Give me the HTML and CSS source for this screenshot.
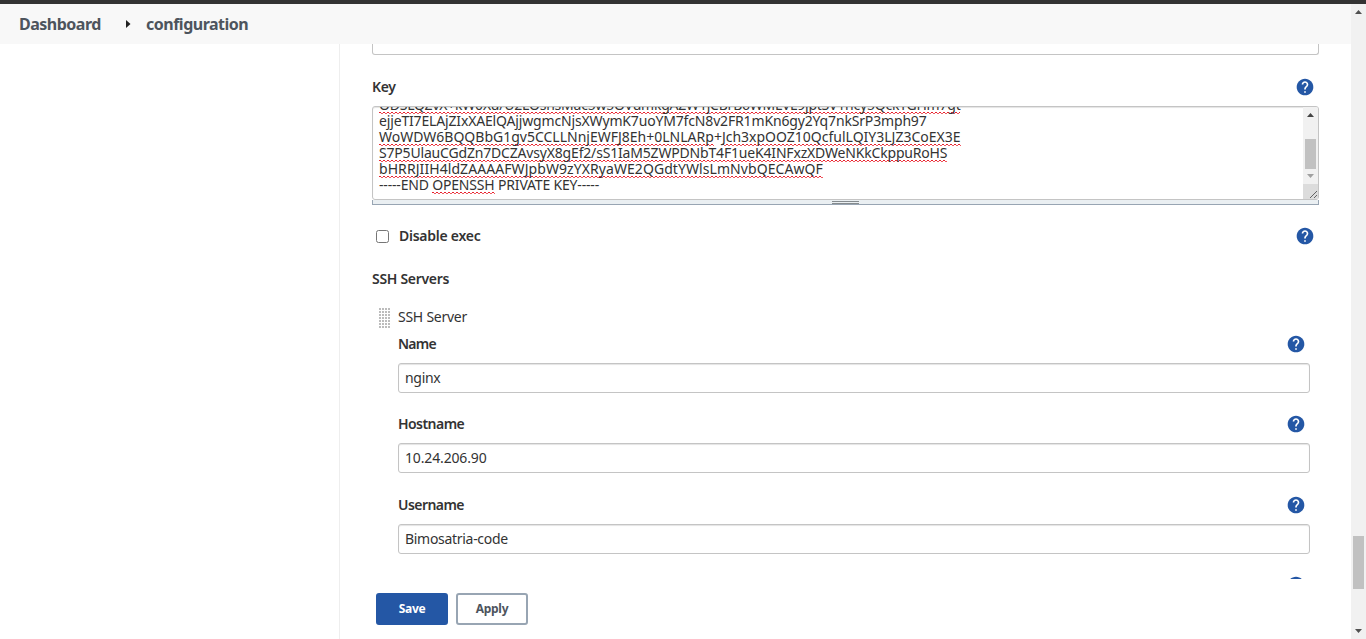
FILE: index.html
```
<!DOCTYPE html>
<html lang="en">
<head>
<meta charset="utf-8">
<title>Dashboard - configuration</title>
<link rel="stylesheet" href="styles.css">
</head>
<body>
<svg width="0" height="0" class="defs" aria-hidden="true">
  <symbol id="help" viewBox="0 0 24 24"><path fill="#2457a5" d="M12 2C6.48 2 2 6.48 2 12s4.48 10 10 10 10-4.48 10-10S17.52 2 12 2z"/><path fill="#fff" d="M13 19h-2v-2h2v2zm2.070-7.750l-.9.920C13.450 12.900 13 13.500 13 15h-2v-.5c0-1.100.450-2.100 1.170-2.830l1.240-1.260c.370-.360.590-.860.590-1.410 0-1.100-.9-2-2-2s-2 .9-2 2H8c0-2.210 1.790-4 4-4s4 1.790 4 4c0 .880-.360 1.680-.930 2.250z"/></symbol>
</svg>
<div class="app">
  <div class="page">
    <header class="crumbs"><span class="crumb dash">Dashboard</span><svg class="arrow" width="5" height="8" viewBox="0 0 5 8"><path d="M0 0l4.500 4L0 8z" fill="#222"/></svg><span class="crumb conf">configuration</span></header>
    <div class="columns">
      <aside class="side"></aside>
      <main class="main">
        <div class="form">
          <div class="cut-input"></div>
          <div class="row key-row"><label class="label key">Key</label><svg class="help"><use href="#help"/></svg></div>
          <div class="area">
            <div class="area-text">
              <div class="line l1"><span class="sp">ODSLQZvX+kW0Xu/U2LOshsMac5w5OVumkgAZW1jCBrB6WMLVL9jptSV1hcy5QckTGHm7gt</span></div>
              <div class="line l2">ejjeTI7ELAjZIxXAElQAjjwgmcNjsXWymK7uoYM7fcN8v2FR1mKn6gy2Yq7nkSrP3mph97</div>
              <div class="line l3"><span class="sp">WoWDW6BQQBbG1gv5CCLLNnjEWFJ8Eh+0LNLARp</span>+<span class="sp">Jch3xpOOZ10QcfulLQIY3LJZ3CoEX3E</span></div>
              <div class="line l4"><span class="sp">S7P5UlauCGdZn7DCZAvsyX8gEf2/sS1IaM5ZWPDNbT4F1ueK4INFxzXDWeNKkCkppuRoHS</span></div>
              <div class="line l5"><span class="sp">bHRRJIIH4ldZAAAAFWJpbW9zYXRyaWE2QGdtYWlsLmNvbQECAwQF</span></div>
              <div class="line l6">-----END <span class="sp">OPENSSH</span> PRIVATE KEY-----</div>
            </div>
            <div class="area-bar">
              <svg width="15" height="77" viewBox="0 0 15 77"><path d="M4 10h7L7.500 6z" fill="#444"/><path fill="#c1c1c1" d="M2 32h11v30H2z"/><path d="M4 67h7l-3.500 4z" fill="#a0a0a0"/></svg>
              <svg class="grip" width="15" height="15" viewBox="0 0 15 15"><path d="M7 14l7-7M11 14l3-3" stroke="#444" stroke-width=".8" fill="none"/></svg>
            </div>
          </div>
          <div class="handle"><i></i></div>
          <div class="row exec-row"><span class="box"></span><label class="label exec">Disable exec</label><svg class="help"><use href="#help"/></svg></div>
          <div class="label servers">SSH Servers</div>
          <section class="server">
            <div class="server-title"><span class="drag"></span><span class="plain">SSH Server</span></div>
            <div class="row name-row"><label class="label name">Name</label><svg class="help"><use href="#help"/></svg></div>
            <div class="input"><span class="v1">nginx</span></div>
            <div class="row host-row"><label class="label host">Hostname</label><svg class="help"><use href="#help"/></svg></div>
            <div class="input"><span class="v2">10.24.206.90</span></div>
            <div class="row user-row"><label class="label user">Username</label><svg class="help"><use href="#help"/></svg></div>
            <div class="input"><span class="v3">Bimosatria-code</span></div>
            <div class="row last-row"><svg class="help"><use href="#help"/></svg></div>
          </section>
        </div>
        <div class="actions"><button class="btn save">Save</button><button class="btn apply">Apply</button></div>
      </main>
    </div>
  </div>
  <div class="scrollbar"><svg class="up" width="7" height="4" viewBox="0 0 7 4"><path d="M0 4h7L3.500 0z" fill="#505050"/></svg><div class="thumb"></div><svg class="down" width="7" height="4" viewBox="0 0 7 4"><path d="M0 0h7L3.500 4z" fill="#505050"/></svg></div>
</div>
</body>
</html>
```
FILE: styles.css
```
* { box-sizing: border-box; }
body { margin: 0; background: #fff; color: #333; font: 14px/20px "Noto Sans", sans-serif; overflow: hidden; }
.defs { position: absolute; }
.app { display: flex; height: 639px; border-top: 4px solid #333; border-image: linear-gradient(#333 75%, #555 75%) 4; }
.page { width: 1351px; display: flex; flex-direction: column; }
.crumbs { height: 40px; flex: none; background: #f8f8f8; display: flex; align-items: center; padding-left: 19px; }
.crumb { font-size: 16px; font-weight: 700; color: #4d545d; white-space: nowrap; }
.dash { width: 107px; letter-spacing: -0.5px; }
.conf { margin-left: 15px; letter-spacing: -0.5px; }
.arrow { display: block; }
.columns { display: flex; flex: 1; min-height: 0; }
.side { width: 340px; border-right: 1px solid #eee; }
.main { flex: 1; display: flex; flex-direction: column; min-width: 0; }
.form { height: 535px; overflow: hidden; padding: 0 32px; }
.cut-input { height: 11px; border: 1px solid #c4c4c4; border-top: 0; border-radius: 0 0 3px 3px; }
.row { display: flex; align-items: center; height: 20px; }
.label { font-weight: 600; white-space: nowrap; }
.help { width: 20px; height: 20px; margin-left: auto; flex: none; }
.key-row { margin-top: 22px; padding-right: 4px; }
.key { letter-spacing: -0.4px; }
.area { height: 94px; margin-top: 9px; border: 1px solid #c4c4c4; border-radius: 3px; box-shadow: inset 0 1px 1px #e4e4e4; display: flex; overflow: hidden; }
.area-text { flex: 1; padding-left: 6px; display: flex; flex-direction: column; justify-content: flex-end; padding-bottom: 6px; overflow: hidden; }
.line { height: 16px; line-height: 16px; flex: none; white-space: pre; }
.sp { display: inline-block; height: 17px; background: linear-gradient(90deg, #e8202c 2px, transparent 2px) 0 15px / 4px 1px repeat-x, linear-gradient(90deg, #ef5a62 2px, transparent 2px) 2px 16px / 4px 1px repeat-x; }
.l1 { letter-spacing: -0.22px; }
.l2 { letter-spacing: -0.16px; }
.l3 { letter-spacing: 0; }
.l4 { letter-spacing: -0.18px; }
.l5 { letter-spacing: 0.07px; }
.l6 { letter-spacing: -0.18px; }
.area-bar { width: 15px; background: #f1f1f1; display: flex; flex-direction: column; }
.area-bar svg { display: block; flex: none; }
.grip { background: #dcdcdc; }
.handle { height: 5px; background: #eaeff2; border: 1px solid #98a5b3; border-top: 0; display: flex; justify-content: center; align-items: flex-end; }
.handle i { width: 27px; height: 3px; border: 1px solid #858b8e; border-width: 1px 0; }
.exec-row { margin-top: 21px; padding: 0 4px; }
.box { width: 13px; height: 13px; border: 1px solid #767676; border-radius: 2.500px; }
.exec { margin-left: 10px; letter-spacing: -0.25px; }
.servers { margin-top: 23px; letter-spacing: -0.3px; }
.server { padding: 18px 9px 0 26px; }
.server-title { height: 20px; display: flex; align-items: center; margin-left: -19px; }
.drag { width: 12px; height: 20px; margin: 2px 7px 0 0; background: radial-gradient(circle at 1px 1px, #bbb 0.700px, transparent 1.200px) 0 0 / 3px 3px; }
.plain { letter-spacing: -0.25px; }
.name-row { margin-top: 7px; }
.server .help { margin-right: 4px; }
.input { height: 30px; margin-top: 9px; border: 1px solid #c4c4c4; border-radius: 3px; box-shadow: inset 0 1px 1px #e4e4e4; padding: 4px 6px; }
.host-row { margin-top: 21px; }
.user-row { margin-top: 22px; }
.last-row { margin-top: 21px; }
.name { letter-spacing: -0.75px; }
.host, .user { letter-spacing: -0.55px; }
.v1, .v3 { letter-spacing: -0.3px; }
.v2 { letter-spacing: -0.15px; }
.actions { display: flex; gap: 8px; padding: 14px 0 0 36px; }
.btn { width: 72px; height: 32px; border-radius: 3px; font: 700 12px/16px "Noto Sans", sans-serif; letter-spacing: -0.3px; padding: 0; }
.save { background: #2457a5; border: 2px solid #2457a5; color: #fff; }
.apply { background: #fff; border: 2px solid #98a5b3; color: #4d545d; }
.scrollbar { width: 15px; background: #f1f1f1; display: flex; flex-direction: column; align-items: center; padding-top: 6px; }
.up { display: block; flex: none; margin-bottom: 522px; }
.thumb { width: 11px; height: 53px; background: #c1c1c1; flex: none; }
.down { margin-top: 40px; display: block; flex: none; }
```
